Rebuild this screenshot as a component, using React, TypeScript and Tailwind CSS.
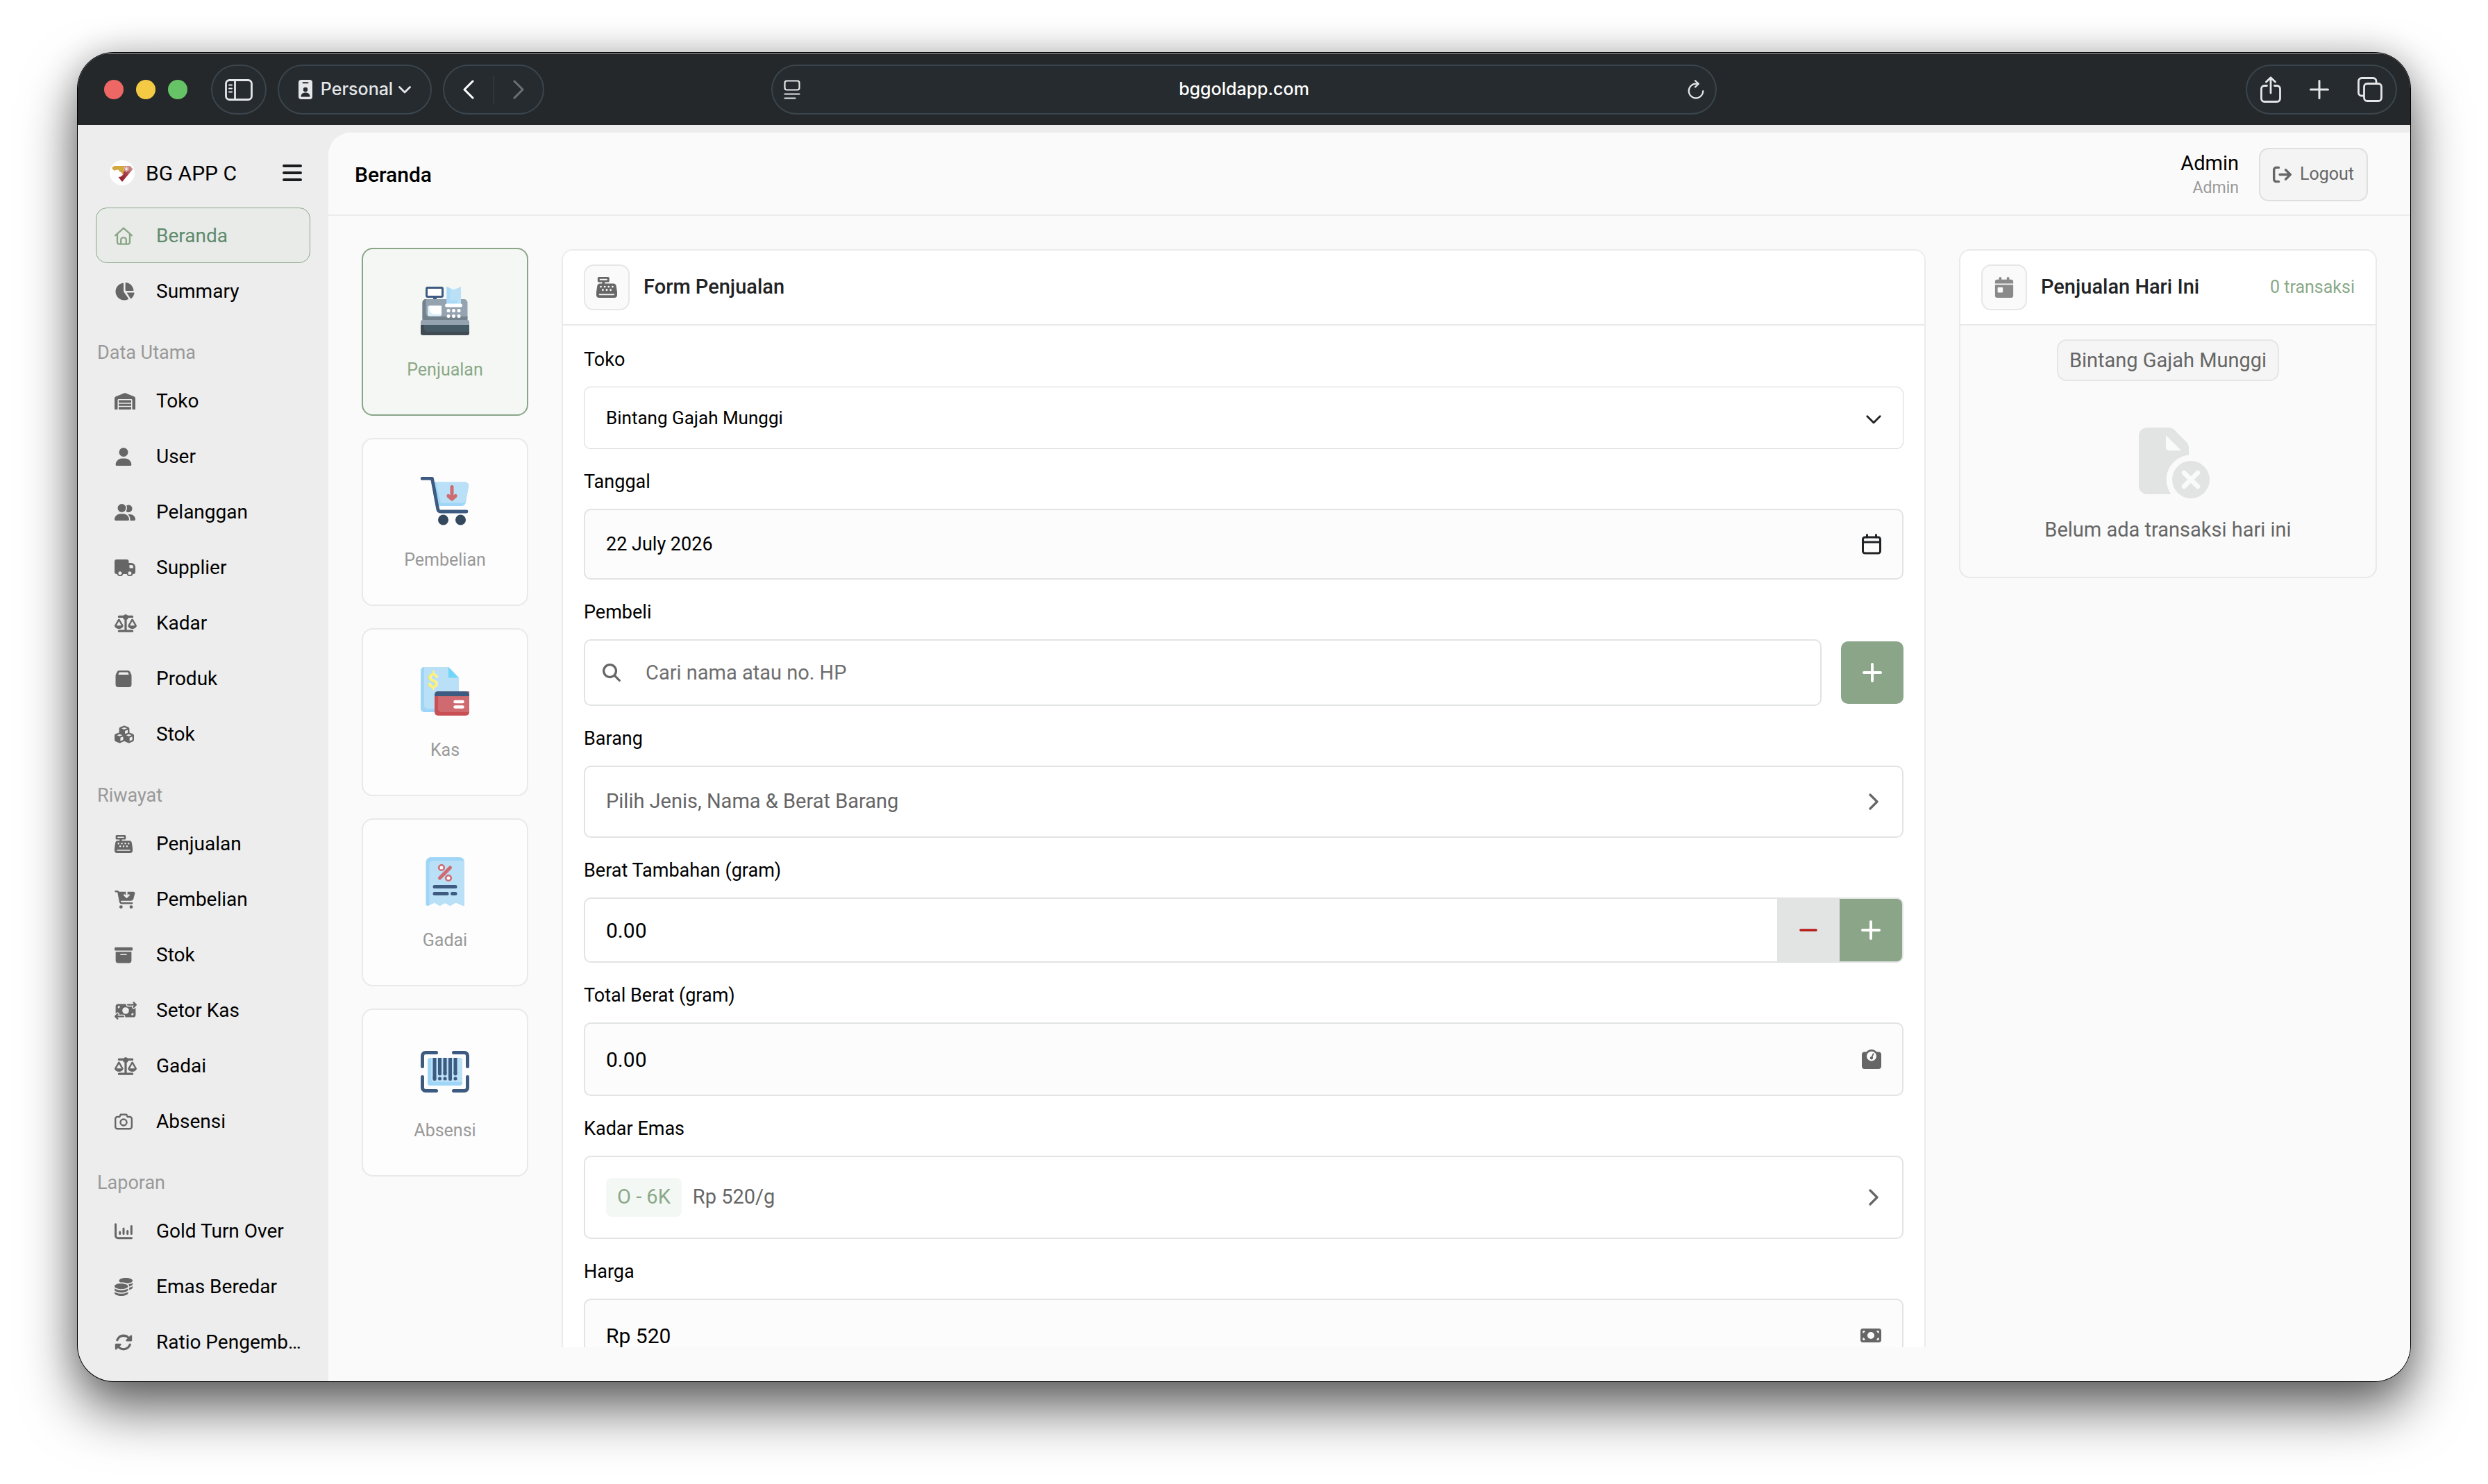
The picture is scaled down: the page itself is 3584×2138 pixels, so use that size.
import type { ReactNode } from 'react'
import {
  FaArrowRightFromBracket,
  FaBoxArchive,
  FaCalendarDay,
  FaCartArrowDown,
  FaCashRegister,
  FaCoins,
  FaCubes,
  FaMagnifyingGlass,
  FaMoneyBill,
  FaMoneyBillTransfer,
  FaRotate,
  FaScaleBalanced,
  FaUser,
  FaUserGroup,
  FaWarehouse,
  FaWeightScale
} from 'react-icons/fa6'

// ---------- sidebar icons ----------

// react-icons puts 1em x 1em on the svg, so wide glyphs need an explicit width
const navIcon = 'size-[26px]'
const navIconWide = 'h-[26px] w-[30px]'

function HouseIcon() {
  return (
    <svg viewBox="0 0 26 26" className={navIcon} fill="none" stroke="currentColor" strokeWidth="2.4" strokeLinecap="round" strokeLinejoin="round">
      <path d="M1.3 12.2 13 1.600l11.700 10.600M4 10.200v11.600a2.800 2.800 0 0 0 2.800 2.800h12.400a2.800 2.800 0 0 0 2.800-2.800V10.200" />
      <path d="M9.200 24.400v-6a3 3 0 0 1 3-3h1.600a3 3 0 0 1 3 3v6" />
    </svg>
  )
}

function PieIcon() {
  return (
    <svg viewBox="0 0 28 26" className="ml-px h-[26px] w-7" fill="currentColor">
      <path d="M12 1.600c0-.6-.5-1-1.100-.9A12.500 12.500 0 1 0 18.400 24.300c.6-.3.700-1 .4-1.500L12.300 13.600a2 2 0 0 1-.3-1.100z" />
      <path d="M14.600 1c0-.6.5-1 1.100-.9 5.600.7 10 5.200 10.700 10.900.1.600-.4 1-.9 1h-9.900a1 1 0 0 1-1-1z" />
      <path d="M16.600 14.600h9.900c.7 0 1.100.5 1 1.100a12.300 12.300 0 0 1-4.300 7.300c-.5.4-1.100.2-1.400-.2z" />
    </svg>
  )
}

function TruckIcon() {
  return (
    <svg viewBox="0 0 30 24" className="h-6 w-[30px]" fill="currentColor">
      <path
        fillRule="evenodd"
        d="M3 0h14.500a3 3 0 0 1 3 3v2H24a6 6 0 0 1 6 6v7a3 3 0 0 1-3 3h-.6a4.600 4.600 0 0 1-8.800 0h-5.200a4.600 4.600 0 0 1-8.800 0H3a3 3 0 0 1-3-3V3a3 3 0 0 1 3-3zm18.500 8v4.500H27V11a3 3 0 0 0-3-3zM8 17.200a2.500 2.500 0 1 0 0 5 2.500 2.500 0 0 0 0-5zm14 0a2.500 2.500 0 1 0 0 5 2.500 2.500 0 0 0 0-5z"
      />
    </svg>
  )
}

function PackageIcon() {
  return (
    <svg viewBox="0 0 26 26" className={navIcon} fill="currentColor">
      <path fillRule="evenodd" d="M6.800 1h12.400a3.500 3.500 0 0 1 3.200 2l1.600 3.600c.3.700.5 1.400.5 2.100V21a4 4 0 0 1-4 4h-15a4 4 0 0 1-4-4V8.700c0-.7.2-1.400.5-2.100L3.600 3a3.500 3.500 0 0 1 3.200-2zm0 2.600L5.300 7h15.400l-1.500-3.400z" />
    </svg>
  )
}

function CameraIcon() {
  return (
    <svg viewBox="0 0 26 24" className="h-6 w-[26px]" fill="none" stroke="currentColor" strokeWidth="2.400" strokeLinejoin="round">
      <path d="M8.800 1.800h8.400l1.500 3.200h3.100a3 3 0 0 1 3 3v11.200a3 3 0 0 1-3 3H4.200a3 3 0 0 1-3-3V8a3 3 0 0 1 3-3h3.100z" />
      <circle cx="13" cy="13" r="4.500" />
    </svg>
  )
}

function ChartIcon() {
  return (
    <svg viewBox="0 0 26 24" className="h-6 w-[26px]" fill="none" stroke="currentColor" strokeWidth="3" strokeLinecap="round">
      <path d="M1.500 1.800v16.400a3.500 3.500 0 0 0 3.500 3.500h19.500M7.700 13v2.500M13 8v7.500M18.700 11.500v4M24.300 4.500v11" />
    </svg>
  )
}

// ---------- illustrations on the menu cards ----------

function RegisterArt() {
  return (
    <svg viewBox="0 0 70 70" className="size-[70px]">
      <path d="M18 14h5v6h-5z" fill="#3d5a80" />
      <rect x="8.500" y="1.500" width="23" height="13" rx="1.500" fill="#fff" stroke="#3d5a80" strokeWidth="3" />
      <rect x="2.500" y="18" width="65" height="32" rx="5" fill="#95a3b0" />
      <path d="M7.500 18a5 5 0 0 0-5 5v26h65v-6h-55a5 5 0 0 1-5-5z" fill="#74828e" />
      <path d="M37.500 0l10 4.500L58 0v26H37.500z" fill="#bae0f7" />
      <path d="M37.500 0l5 2.200V20H53v6H37.500z" fill="#a9daf8" />
      <rect x="35" y="24.500" width="25" height="5" rx="2.500" fill="#fff" />
      <rect x="10" y="27.500" width="20" height="15" rx="2" fill="#dbeef6" />
      <path d="M12.500 27.500H30v12H20a7.500 7.500 0 0 1-7.500-7.500z" fill="#fff" />
      <g fill="#fff">
        <circle cx="40" cy="34.500" r="2.500" />
        <circle cx="47.500" cy="34.500" r="2.500" />
        <circle cx="55" cy="34.500" r="2.500" />
        <circle cx="40" cy="42.500" r="2.500" />
        <circle cx="47.500" cy="42.500" r="2.500" />
        <circle cx="55" cy="42.500" r="2.500" />
      </g>
      <path d="M3 48h64a3 3 0 0 1 3 3v5H0v-5a3 3 0 0 1 3-3z" fill="#95a3b0" />
      <path d="M0 55h70v12a3 3 0 0 1-3 3H3a3 3 0 0 1-3-3z" fill="#414b54" />
      <path d="M5 55h65v10H10a5 5 0 0 1-5-5z" fill="#465a65" />
    </svg>
  )
}

function CartArt() {
  return (
    <svg viewBox="0 0 70 70" className="size-[70px]">
      <path d="M18 7.500h46a5 5 0 0 1 5 6l-4 23a7 7 0 0 1-7 5.500H27z" fill="#9fd6f7" />
      <path d="M22 7.500h42a5 5 0 0 1 5 6l-4 20a5 5 0 0 1-5 4H29z" fill="#bae0f7" />
      <path d="M2 2.400h14.500l8.300 44.400a4 4 0 0 0 4 3.200H66" fill="none" stroke="#3d5a80" strokeWidth="4.800" strokeLinecap="round" strokeLinejoin="round" />
      <circle cx="32.500" cy="62" r="7.500" fill="#34495e" />
      <circle cx="57.500" cy="62" r="7.500" fill="#34495e" />
      <path d="M45 14.500v17M39.800 27.500 45 32l5.200-4.500" fill="none" stroke="#cf6a70" strokeWidth="5" strokeLinecap="round" strokeLinejoin="round" />
    </svg>
  )
}

function CashArt() {
  return (
    <svg viewBox="0 0 70 70" className="size-[70px]">
      <path d="M5 0h35l15 16v49H5a5 5 0 0 1-5-5V5a5 5 0 0 1 5-5z" fill="#9fd6f7" />
      <path d="M5 0h35l15 16v44H10a5 5 0 0 1-5-5z" fill="#bae0f7" />
      <path d="M40 0l15 15.500H40z" fill="#70d6f9" />
      <text x="17.500" y="30" textAnchor="middle" fontSize="29" fontWeight="700" fill="#fff176" className="font-['Roboto',sans-serif]">$</text>
      <rect x="20" y="35" width="50" height="35" rx="5" fill="#c94f55" />
      <path d="M25 35h45v30H30a5 5 0 0 1-5-5z" fill="#cf6a70" />
      <path d="M25 35h40a5 5 0 0 1 5 5v2H20v-2a5 5 0 0 1 5-5z" fill="#3d5a80" />
      <path d="M49.500 50h11M49.500 57.500h11" stroke="#fff" strokeWidth="4.600" strokeLinecap="round" />
    </svg>
  )
}

function PawnArt() {
  return (
    <svg viewBox="0 0 70 70" className="size-[70px]">
      <path d="M14 0h42a7 7 0 0 1 7 7v61.500a1.500 1.500 0 0 1-2.200 1.300L50.500 65.500l-8 4.500-7.500-4-7.500 4-7.500-4.500-9 4.300A2.500 2.500 0 0 1 7.500 68V7a7 7 0 0 1 6.500-7z" fill="#9fd6f7" />
      <path d="M18 5h45v63.500a1.500 1.500 0 0 1-2.200 1.300L50.500 65.500l-8 4.500-7.500-4-7.500 4-7.500-4.500-7.500 3V10.500A5.500 5.500 0 0 1 18 5z" fill="#bae0f7" />
      <g fill="#fff" stroke="#cf6a70" strokeWidth="2.600">
        <circle cx="30" cy="15" r="3.800" />
        <circle cx="40" cy="30" r="3.800" />
      </g>
      <path d="M27.500 30l15-15" stroke="#cf6a70" strokeWidth="5" strokeLinecap="round" />
      <path d="M20 42.500h30M20 52.500h18M45.500 52.500H50" stroke="#3d5a80" strokeWidth="5" strokeLinecap="round" />
    </svg>
  )
}

function BarcodeArt() {
  return (
    <svg viewBox="0 0 70 70" className="size-[70px]">
      <rect x="10" y="15" width="50" height="40" rx="4" fill="#9fd6f7" />
      <path d="M15 15h41a4 4 0 0 1 4 4v31H20a5 5 0 0 1-5-5z" fill="#bae0f7" />
      <path d="M20 15v30M42.500 15v30M27.500 15v22.500M35 15v22.500M50 15v22.500" stroke="#3d5a80" strokeWidth="5" />
      <path d="M20 44v1.500M42.500 44v1.500M27.500 37v1M35 37v1M50 37v1M27.500 45h.01M35 45h.01M50 45h.01" stroke="#3d5a80" strokeWidth="5" strokeLinecap="round" />
      <path d="M22.500 7.500H7A4.500 4.500 0 0 0 2.500 12v15.500M47.500 7.500H63a4.500 4.500 0 0 1 4.500 4.500v15.500M22.500 62.500H7A4.500 4.500 0 0 1 2.500 58V42.500M47.500 62.500H63a4.500 4.500 0 0 0 4.500-4.500V42.500" fill="none" stroke="#3d5a80" strokeWidth="5" strokeLinecap="round" />
    </svg>
  )
}

// ---------- small shared glyphs ----------

function ChevronRightIcon() {
  return (
    <svg viewBox="0 0 14 24" className="mr-1 h-6 w-[14px] shrink-0 text-[#666]" fill="none" stroke="currentColor" strokeWidth="3.200" strokeLinecap="round" strokeLinejoin="round">
      <path d="M2 2l10 10L2 22" />
    </svg>
  )
}

function PlusIcon() {
  return (
    <svg viewBox="0 0 28 28" className="size-7" fill="none" stroke="currentColor" strokeWidth="4" strokeLinecap="round">
      <path d="M14 2v24M2 14h24" />
    </svg>
  )
}

const sections = [
  {
    title: '',
    items: [
      { label: 'Beranda', icon: <HouseIcon />, active: true },
      { label: 'Summary', icon: <PieIcon /> }
    ]
  },
  {
    title: 'Data Utama',
    items: [
      { label: 'Toko', icon: <FaWarehouse className={navIconWide} /> },
      { label: 'User', icon: <FaUser className={navIcon} /> },
      { label: 'Pelanggan', icon: <FaUserGroup className={navIconWide} /> },
      { label: 'Supplier', icon: <TruckIcon /> },
      { label: 'Kadar', icon: <FaScaleBalanced className="h-[26px] w-8" /> },
      { label: 'Produk', icon: <PackageIcon /> },
      { label: 'Stok', icon: <FaCubes className="h-[26px] w-7" /> }
    ]
  },
  {
    title: 'Riwayat',
    items: [
      { label: 'Penjualan', icon: <FaCashRegister className={navIcon} /> },
      { label: 'Pembelian', icon: <FaCartArrowDown className={navIconWide} /> },
      { label: 'Stok', icon: <FaBoxArchive className={navIcon} /> },
      { label: 'Setor Kas', icon: <FaMoneyBillTransfer className="h-[26px] w-8" /> },
      { label: 'Gadai', icon: <FaScaleBalanced className="h-[26px] w-8" /> },
      { label: 'Absensi', icon: <CameraIcon /> }
    ]
  },
  {
    title: 'Laporan',
    items: [
      { label: 'Gold Turn Over', icon: <ChartIcon /> },
      { label: 'Emas Beredar', icon: <FaCoins className={navIcon} /> },
      { label: 'Ratio Pengemb…', icon: <FaRotate className={navIcon} /> }
    ]
  }
]

const menu = [
  { label: 'Penjualan', art: <RegisterArt />, active: true },
  { label: 'Pembelian', art: <CartArt /> },
  { label: 'Kas', art: <CashArt /> },
  { label: 'Gadai', art: <PawnArt /> },
  { label: 'Absensi', art: <BarcodeArt /> }
]

const pill = 'flex h-[72px] items-center rounded-full border-2 border-[#3a454d] bg-[#262b2f] text-[#e4e6e7]'

function BrowserBar() {
  return (
    <div className="grid h-[104px] shrink-0 grid-cols-[1fr_minmax(0,1362px)_1fr] items-center border-t-2 border-[#6a6d6f] bg-[#24282b] font-['Inter',sans-serif]">
      <div className="flex items-center gap-4 pl-[38px]">
        <div className="mr-[18px] flex gap-[18px]">
          <span className="size-7 rounded-full bg-[#ed6765]" />
          <span className="size-7 rounded-full bg-[#f4c944]" />
          <span className="size-7 rounded-full bg-[#66c466]" />
        </div>
        <button type="button" aria-label="Sidebar" className={`${pill} w-20 justify-center`}>
          <svg viewBox="0 0 40 31" className="h-[31px] w-10" fill="none" stroke="currentColor" strokeWidth="2.800" strokeLinecap="round">
            <rect x="1.500" y="1.500" width="37" height="28" rx="5" />
            <path d="M14.500 2v27" />
            <path d="M6 8.500h4M6 13.500h4M6 18.500h4" strokeWidth="2" />
          </svg>
        </button>
        <button type="button" className={`${pill} w-[222px] justify-center gap-3`}>
          <svg viewBox="0 0 20 28" className="h-7 w-5">
            <rect width="20" height="28" rx="4" fill="#e4e6e7" />
            <path d="M6.500 4.200h7" stroke="#262b2f" strokeWidth="2" strokeLinecap="round" />
            <circle cx="10" cy="14" r="3.200" fill="#262b2f" />
            <path d="M3.500 24.500c0-4 2.500-6 6.500-6s6.500 2 6.500 6z" fill="#262b2f" />
          </svg>
          <span className="text-[25px] font-medium">Personal</span>
          <svg viewBox="0 0 18 11" className="-ml-1 h-[11px] w-[18px]" fill="none" stroke="currentColor" strokeWidth="2.800" strokeLinecap="round" strokeLinejoin="round">
            <path d="M1.500 1.500 9 9l7.500-7.500" />
          </svg>
        </button>
        <div className={`${pill} w-[146px] justify-between px-[26px]`}>
          <button type="button" aria-label="Back">
            <svg viewBox="0 0 17 28" className="h-7 w-[17px]" fill="none" stroke="#fff" strokeWidth="3" strokeLinecap="round" strokeLinejoin="round">
              <path d="M15 2 3 14l12 12" />
            </svg>
          </button>
          <span className="h-10 w-px bg-[#3f464b]" />
          <button type="button" aria-label="Forward">
            <svg viewBox="0 0 17 28" className="h-7 w-[17px]" fill="none" stroke="#6b7074" strokeWidth="3" strokeLinecap="round" strokeLinejoin="round">
              <path d="M2 2l12 12L2 26" />
            </svg>
          </button>
        </div>
      </div>

      <div className={`${pill} justify-between px-4`}>
        <button type="button" aria-label="Reader">
          <svg viewBox="0 0 24 28" className="h-7 w-6" fill="none" stroke="currentColor" strokeWidth="2.200" strokeLinecap="round">
            <rect x="1.500" y="1.500" width="21" height="13" rx="3" />
            <path d="M1.500 20.500h21M1.500 26.500h15" />
          </svg>
        </button>
        <span className="text-[25px] font-medium text-white">bggoldapp.com</span>
        <button type="button" aria-label="Reload">
          <svg viewBox="0 0 24 28" className="h-7 w-6" fill="none" stroke="currentColor" strokeWidth="2.200" strokeLinecap="round" strokeLinejoin="round">
            <path d="M22.300 16A10.300 10.300 0 1 1 12 5.700h3.500" />
            <path d="M11 1.200l4.800 4.500L11 10.400" />
          </svg>
        </button>
      </div>

      <div className="flex justify-end pr-[19px]">
        <div className={`${pill} w-[218px] justify-between px-[19px]`}>
          <button type="button" aria-label="Share">
            <svg viewBox="0 0 30 38" className="h-[38px] w-[30px]" fill="none" stroke="currentColor" strokeWidth="2.800" strokeLinecap="round" strokeLinejoin="round">
              <path d="M9.500 13.500H6a4.500 4.500 0 0 0-4.500 4.500v14A4.500 4.500 0 0 0 6 36.500h18a4.500 4.500 0 0 0 4.500-4.500V18a4.500 4.500 0 0 0-4.500-4.500h-3.500M15 24V2.500M8.500 8 15 1.800 21.500 8" />
            </svg>
          </button>
          <button type="button" aria-label="New tab">
            <svg viewBox="0 0 28 28" className="size-7" fill="none" stroke="currentColor" strokeWidth="3" strokeLinecap="round">
              <path d="M14 1.500v25M1.500 14h25" />
            </svg>
          </button>
          <button type="button" aria-label="Tabs">
            <svg viewBox="0 0 36 36" className="size-9" fill="none" stroke="currentColor" strokeWidth="2.800" strokeLinejoin="round">
              <rect x="9.500" y="9.500" width="25" height="25" rx="4.500" />
              <path d="M9.500 27H6a4.500 4.500 0 0 1-4.500-4.500V6A4.500 4.500 0 0 1 6 1.500h16.500A4.500 4.500 0 0 1 27 6v3.500" />
            </svg>
          </button>
        </div>
      </div>
    </div>
  )
}

function Logo() {
  return (
    <svg viewBox="0 0 36 36" className="size-9">
      <defs>
        <linearGradient id="ruby" x1="1" y1="0" x2="0.200" y2="1">
          <stop offset="0" stopColor="#d9aaa0" />
          <stop offset="0.550" stopColor="#a63a44" />
          <stop offset="1" stopColor="#8e1c2a" />
        </linearGradient>
      </defs>
      <circle cx="18" cy="18" r="18" fill="#fff" />
      <path d="M6.500 8H22v9l-3 4-2-3.500-3-1.500-1.500-2.500-4 .5-2 1-3.500-4z" fill="#d2a841" />
      <path d="M22 8h7.500l4 4.500L18 31l-5.500-7 3.500-.5 3.500-3z" fill="url(#ruby)" />
      <path d="M24 8v9M19.800 12.500h8.400M21.200 9.700l5.600 5.600M26.800 9.700l-5.600 5.600" stroke="#fff" strokeWidth="1" />
    </svg>
  )
}

function Sidebar() {
  return (
    <aside className="w-[361px] shrink-0 overflow-hidden px-[26px] pt-[35px]">
      <div className="flex h-[68px] items-center pr-3 pl-5">
        <Logo />
        <span className="ml-4 text-[30px]">BG APP C</span>
        <button type="button" aria-label="Menu" className="ml-auto">
          <svg viewBox="0 0 28 24" className="h-6 w-7" stroke="#1a1c1e" strokeWidth="4" strokeLinecap="round">
            <path d="M2 2h24M2 12h24M2 22h24" />
          </svg>
        </button>
      </div>
      <nav className="mt-4">
        {sections.map((section) => (
          <div key={section.title}>
            {section.title && (
              <h2 className="flex h-[78px] items-center pt-5 pl-[2px] text-[27px] text-[#999]">{section.title}</h2>
            )}
            {section.items.map((item) => (
              <a
                key={item.label}
                href="#"
                className={
                  'active' in item
                    ? 'flex h-20 items-center rounded-[16px] border border-[#8aa888] bg-[#e8ebe8] pt-px pl-[26px] text-[#5f8a6c]'
                    : 'flex h-20 items-center border border-transparent pt-px pl-[26px] text-black'
                }
              >
                <span className={'active' in item ? 'w-[60px] shrink-0 text-[#8aa888]' : 'w-[60px] shrink-0 text-[#666]'}>{item.icon}</span>
                <span className="text-[28px] leading-10 whitespace-nowrap">{item.label}</span>
              </a>
            ))}
          </div>
        ))}
      </nav>
    </aside>
  )
}

function Field({ id, label, children }: { id: string; label: string; children: ReactNode }) {
  return (
    <div className="flex flex-col gap-[19px]">
      <label htmlFor={id} className="text-[27px] leading-10">{label}</label>
      {children}
    </div>
  )
}

function CardHeader({ icon, title, children }: { icon: ReactNode; title: string; children?: ReactNode }) {
  return (
    <div className="flex h-[108px] shrink-0 items-center border-b-2 border-[#e9e9e9] bg-white px-[30px]">
      <span className="flex size-[66px] items-center justify-center rounded-[14px] border-2 border-[#e7e7e7] bg-[#fafafa] text-[#666]">
        {icon}
      </span>
      <h2 className="ml-5 text-[29px] font-medium text-[#212325]">{title}</h2>
      {children}
    </div>
  )
}

const box = 'flex items-center rounded-[10px] border-2 border-[#e2e3e3]'
const input = 'h-full min-w-0 flex-1 bg-transparent outline-none'

function SalesForm() {
  return (
    <form className="min-w-0 flex-1 overflow-hidden rounded-t-[16px] border-2 border-b-0 border-[#ebebeb] bg-white">
      <CardHeader icon={<FaCashRegister className="size-[30px]" />} title="Form Penjualan" />
      <div className="flex flex-col gap-[27px] px-[30px] pt-[29px]">
        <Field id="toko" label="Toko">
          <div className="relative">
            <select id="toko" className="h-[90px] w-full appearance-none rounded-[10px] border border-[#d4d5d5] bg-white px-[31px] text-[26px]">
              <option>Bintang Gajah Munggi</option>
            </select>
            <svg viewBox="0 0 22 13" className="pointer-events-none absolute top-[41px] right-8 h-[13px] w-[22px]" fill="none" stroke="#212325" strokeWidth="2.800" strokeLinecap="round" strokeLinejoin="round">
              <path d="M1.800 1.800 11 11l9.200-9.200" />
            </svg>
          </div>
        </Field>

        <Field id="tanggal" label="Tanggal">
          <div className={`${box} h-[102px] bg-[#fcfcfc] px-[30px]`}>
            <input id="tanggal" readOnly defaultValue="22 July 2026" className={`${input} text-[27px]`} />
            <svg viewBox="0 0 28 30" className="h-[30px] w-7" fill="none" stroke="#212325" strokeWidth="3" strokeLinecap="round" strokeLinejoin="round">
              <rect x="1.500" y="5" width="25" height="23" rx="3" />
              <path d="M2 12h24M7.500 1.500V5M20.500 1.500V5" />
            </svg>
          </div>
        </Field>

        <Field id="pembeli" label="Pembeli">
          <div className="flex items-center gap-7">
            <div className={`${box} h-24 min-w-0 flex-1 px-[25px]`}>
              <FaMagnifyingGlass className="size-[26px] text-[#666]" />
              <input id="pembeli" placeholder="Cari nama atau no. HP" className={`${input} ml-9 text-[29px] placeholder:text-[#6e6e6e]`} />
            </div>
            <button type="button" aria-label="Tambah pembeli" className="flex size-[90px] items-center justify-center rounded-[10px] bg-[#8aa588] text-white">
              <PlusIcon />
            </button>
          </div>
        </Field>

        <Field id="barang" label="Barang">
          <button type="button" id="barang" className={`${box} h-[104px] justify-between px-[30px] text-[29px] text-[#666]`}>
            Pilih Jenis, Nama &amp; Berat Barang
            <ChevronRightIcon />
          </button>
        </Field>

        <Field id="tambahan" label="Berat Tambahan (gram)">
          <div className={`${box} h-[94px] overflow-hidden pl-[30px]`}>
            <input id="tambahan" defaultValue="0.00" className={`${input} text-[30px]`} />
            <button type="button" aria-label="Kurangi" className="flex h-full w-[90px] items-center justify-center bg-[#e1e4e2]">
              <svg viewBox="0 0 26 4" className="h-1 w-[26px]">
                <path d="M2 2h22" stroke="#b71c1c" strokeWidth="3.600" strokeLinecap="round" />
              </svg>
            </button>
            <button type="button" aria-label="Tambah" className="flex h-full w-[90px] items-center justify-center bg-[#8aa588] text-white">
              <PlusIcon />
            </button>
          </div>
        </Field>

        <Field id="total" label="Total Berat (gram)">
          <div className={`${box} h-[106px] bg-[#fcfcfc] px-[30px]`}>
            <input id="total" readOnly defaultValue="0.00" className={`${input} text-[30px]`} />
            <FaWeightScale className="size-7 text-[#666]" />
          </div>
        </Field>

        <Field id="kadar" label="Kadar Emas">
          <button type="button" id="kadar" className={`${box} h-[120px] px-[30px] text-[29px] text-[#666]`}>
            <span className="flex h-14 items-center rounded-lg bg-[#f4f8f4] px-4 text-[#8aa888]">O - 6K</span>
            <span className="mr-auto ml-4">Rp 520/g</span>
            <ChevronRightIcon />
          </button>
        </Field>

        <Field id="harga" label="Harga">
          <div className={`${box} h-[106px] bg-[#fcfcfc] px-[30px]`}>
            <input id="harga" readOnly defaultValue="Rp 520" className={`${input} text-[30px]`} />
            <FaMoneyBill className="size-[30px] text-[#666]" />
          </div>
        </Field>
      </div>
    </form>
  )
}

function TodaySales() {
  return (
    <section className="w-[602px] shrink-0 self-start overflow-hidden rounded-[16px] border-2 border-[#e9e9e9]">
      <CardHeader icon={<FaCalendarDay className="size-[30px] text-[#8a8a8a]" />} title="Penjualan Hari Ini">
        <span className="ml-auto text-[25px] text-[#8aa888]">0 transaksi</span>
      </CardHeader>
      <div className="flex flex-col items-center pt-5 pb-12 text-[29px] leading-10 text-[#666]">
        <span className="flex h-[60px] items-center rounded-[14px] border-2 border-[#e6e6e6] bg-[#f5f5f5] px-4">
          Bintang Gajah Munggi
        </span>
        <svg viewBox="-96 0 640 544" className="mt-[67px] h-[102px] w-[120px]" fill="#e1e4e2">
          <path d="M64 0h165c17 0 33 7 45 19l91 91c12 12 19 28 19 45v56A190 190 0 0 0 248 512H64a64 64 0 0 1-64-64V64A64 64 0 0 1 64 0zm144 58v94c0 13 11 24 24 24h94z" />
          <circle cx="400" cy="400" r="144" />
          <path d="M347 347l106 106M453 347 347 453" stroke="#fafafa" strokeWidth="36" strokeLinecap="round" />
        </svg>
        <p className="mt-[25px]">Belum ada transaksi hari ini</p>
      </div>
    </section>
  )
}

export default function App() {
  return (
    <div className="flex h-screen flex-col bg-white px-28 pt-[76px] pb-[148px] font-['Roboto',sans-serif] text-black">
      <div className="flex min-h-0 flex-1 flex-col overflow-hidden rounded-[52px] bg-[#ededed] shadow-[0_0_0_1px_#000,0_40px_80px_rgba(0,0,0,0.6),0_0_50px_rgba(0,0,0,0.2)]">
        <BrowserBar />
        <div className="flex min-h-0 flex-1">
          <Sidebar />
          <main className="mt-[11px] flex min-w-0 flex-1 flex-col rounded-tl-[32px] bg-[#fafafa]">
            <header className="flex h-[120px] shrink-0 items-center justify-between border-b-2 border-[#ececec] pt-[2px] pr-[61px] pl-[38px]">
              <h1 className="text-[30px] font-medium">Beranda</h1>
              <div className="flex items-center gap-[29px]">
                <div className="pt-1 text-right">
                  <p className="text-[29px] leading-9">Admin</p>
                  <p className="text-[23px] leading-9 text-[#999]">Admin</p>
                </div>
                <button type="button" className="flex h-[77px] items-center gap-3 rounded-[14px] border-2 border-[#dfdfdf] bg-[#f4f4f4] px-[18px] text-[25px] text-[#666]">
                  <FaArrowRightFromBracket className="size-[27px]" />
                  Logout
                </button>
              </div>
            </header>
            <div className="mb-[49px] flex min-h-0 flex-1 gap-12 overflow-hidden px-12 pt-[46px]">
              <div className="flex w-60 shrink-0 flex-col gap-8">
                {menu.map((item) => (
                  <button
                    key={item.label}
                    type="button"
                    className={
                      item.active
                        ? 'flex h-[242px] flex-col items-center justify-center gap-8 rounded-[16px] border-2 border-[#8aa588] bg-[#f4f7f3] pt-2 text-[25px] leading-9 text-[#8aa888]'
                        : 'flex h-[242px] flex-col items-center justify-center gap-8 rounded-[16px] border-2 border-[#e9e9e9] bg-[#fdfdfd] pt-2 text-[25px] leading-9 text-[#999]'
                    }
                  >
                    {item.art}
                    {item.label}
                  </button>
                ))}
              </div>
              <div className="flex min-w-0 flex-1 gap-12 pt-[2px]">
                <SalesForm />
                <TodaySales />
              </div>
            </div>
          </main>
        </div>
      </div>
    </div>
  )
}
